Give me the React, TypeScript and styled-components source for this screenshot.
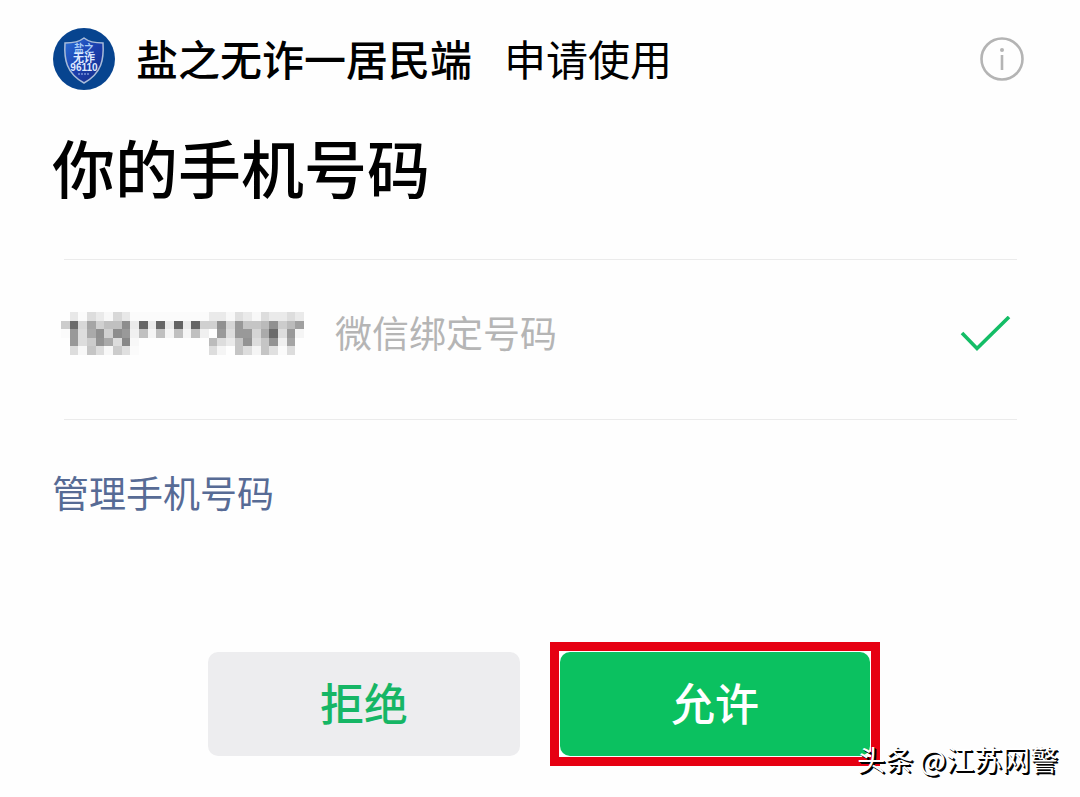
import React from "react";
import styled, { createGlobalStyle } from "styled-components";

const GlobalStyle = createGlobalStyle`
  * { box-sizing: border-box; }
  body {
    margin: 0;
    background: #fefefe;
    color: #000;
    font-family: "Noto Sans CJK SC", sans-serif;
  }
`;

const Sheet = styled.main`
  position: relative;
  padding: 28px 54px 41px 52px;
`;

const Header = styled.header`
  display: flex;
  align-items: flex-start;
  height: 64px;
`;

const Logo = styled.svg`
  flex: none;
  width: 64px;
  height: 64px;
  margin-right: 20px;
`;

const AppName = styled.strong`
  font-size: 42px;
  line-height: 60px;
  font-weight: 500;
  white-space: nowrap;
`;

const Request = styled.span`
  margin-left: 32px;
  font-size: 42px;
  line-height: 60px;
  white-space: nowrap;
`;

const InfoButton = styled.button`
  width: 44px;
  height: 44px;
  margin: 9px 2px 0 auto;
  padding: 0;
  border: 0;
  background: none;

  svg {
    display: block;
  }
`;

const Title = styled.h1`
  margin: 28px 0 47px;
  font-size: 63px;
  line-height: 92px;
  font-weight: 500;
`;

const NumberOption = styled.label`
  display: flex;
  align-items: center;
  margin: 0 9px 0 12px;
  padding-bottom: 12px;
  height: 161px;
  border: solid #ebebeb;
  border-width: 1px 0;
`;

const MaskedNumber = styled.svg`
  flex: none;
  width: 243px;
  height: 43px;
  margin-left: -3px;
`;

const NumberNote = styled.span`
  margin-left: 31px;
  padding-bottom: 4px;
  font-size: 37px;
  line-height: 56px;
  color: #b5b5b5;
`;

const HiddenRadio = styled.input`
  appearance: none;
  width: 0;
  height: 0;
  margin: 0;
`;

const Check = styled.svg`
  width: 52px;
  height: 36px;
  margin-left: auto;
  margin-right: 6px;
`;

const ManageLink = styled.a`
  display: block;
  width: fit-content;
  margin-top: 42px;
  font-size: 37px;
  line-height: 60px;
  color: #576b95;
  text-decoration: none;
`;

const Actions = styled.div`
  display: flex;
  justify-content: center;
  gap: 40px;
  margin-top: 130px;
`;

const ActionButton = styled.button<{ $primary?: boolean }>`
  width: ${(p) => (p.$primary ? 310 : 312)}px;
  height: 104px;
  padding: 0 0 4px;
  border: 0;
  border-radius: 10px;
  background: ${(p) => (p.$primary ? "#0bc160" : "#ededef")};
  color: ${(p) => (p.$primary ? "#fff" : "#16b665")};
  font-family: inherit;
  font-size: 44px;
  line-height: 64px;
  font-weight: 500;
`;

const Highlight = styled.div`
  outline: 9px solid #e60012;
  outline-offset: 1px;
`;

const Watermark = styled.p`
  position: absolute;
  right: 22px;
  bottom: 18px;
  margin: 0;
  font-size: 28px;
  line-height: 40px;
  color: #fff;
  text-shadow: 1px 1px 0 #000, 2px 2px 0 #000;
  white-space: nowrap;
`;

// Grey level of every mosaic cell, two hex digits each, row by row.
const MOSAIC = [
  "fe e8 fb dd ea f8 d8 e8 fb fb fb fb fb fb fb fb fb ea ea f8 df ea f8 dd ea ea dd ea",
  "cc 6b d8 a5 d0 c0 c0 8d ea 66 ea 66 ea 62 ea 66 d0 d0 90 d5 98 c5 c5 ba 90 cc bb a0",
  "fb 99 dd aa 90 d0 8d 99 f0 c0 f5 c0 f5 c0 f5 c0 f0 fe 99 dd 99 99 d5 aa 6b dd 99 f5",
  "fe 99 dd cc 93 aa dd 88 f8 fe fe fe fe fe fe fe fe bb dd ea c5 93 dd c5 93 f0 a5 fe",
  "fe dd f8 c5 dd f8 cc e0 fb fe fe fe fe fe fe fe fe dd f5 fe c5 dd f5 c5 e0 fb dd fe",
].map((row) => row.split(" "));

function AppLogo() {
  return (
    <Logo viewBox="0 0 64 64" role="img" aria-label="盐之无诈">
      <defs>
        <linearGradient id="shield" x1="0" y1="0" x2="1" y2="1">
          <stop offset="0" stopColor="#2a6fd6" />
          <stop offset="0.5" stopColor="#1b3fae" />
          <stop offset="1" stopColor="#152c86" />
        </linearGradient>
      </defs>
      <circle cx="32" cy="31" r="31" fill="#07448f" />
      <path
        d="M32 10C27 14 20 15 13 15C12 31 14 45 32 55C50 45 52 31 51 15C44 15 37 14 32 10Z"
        fill="url(#shield)"
        stroke="#a9bcd9"
        strokeWidth="1.5"
      />
      <g fill="#dfeaff" textAnchor="middle" fontWeight="700">
        <text x="32" y="24" fontSize="10" fill="#a9cdf7">盐之</text>
        <text x="32" y="34" fontSize="11">无诈</text>
        <text x="32" y="43" fontSize="10" fontFamily="Liberation Sans, sans-serif">96110</text>
      </g>
      <path d="M26 46H38" stroke="#a9bcf0" strokeDasharray="2 1" />
    </Logo>
  );
}

export default function App() {
  return (
    <>
      <GlobalStyle />
      <Sheet>
        <Header>
          <AppLogo />
          <AppName>盐之无诈一居民端</AppName>
          <Request>申请使用</Request>
          <InfoButton type="button" aria-label="详情">
            <svg width="44" height="44" viewBox="0 0 44 44" fill="none" stroke="#b4b4b4">
              <circle cx="22" cy="22" r="20.5" strokeWidth="2.6" />
              <path d="M22 18V33" strokeWidth="2.6" />
              <circle cx="22" cy="13" r="2" fill="#b4b4b4" stroke="none" />
            </svg>
          </InfoButton>
        </Header>

        <Title>你的手机号码</Title>

        <NumberOption>
          <MaskedNumber
            viewBox="0 0 28 5"
            preserveAspectRatio="none"
            shapeRendering="crispEdges"
            role="img"
            aria-label="手机号码"
          >
            {MOSAIC.map((row, y) =>
              row.map((v, x) => (
                <rect key={`${x}-${y}`} x={x} y={y} width="1" height="1" fill={`#${v}${v}${v}`} />
              ))
            )}
          </MaskedNumber>
          <NumberNote>微信绑定号码</NumberNote>
          <HiddenRadio type="radio" name="phone" defaultChecked />
          <Check viewBox="0 0 52 36" fill="none" stroke="#14bd66" strokeWidth="3.6">
            <path d="M3 17L18 32.5L50 1" />
          </Check>
        </NumberOption>

        <ManageLink href="#manage">管理手机号码</ManageLink>

        <Actions>
          <ActionButton type="button">拒绝</ActionButton>
          <Highlight>
            <ActionButton type="button" $primary>
              允许
            </ActionButton>
          </Highlight>
        </Actions>

        <Watermark>头条 @江苏网警</Watermark>
      </Sheet>
    </>
  );
}
